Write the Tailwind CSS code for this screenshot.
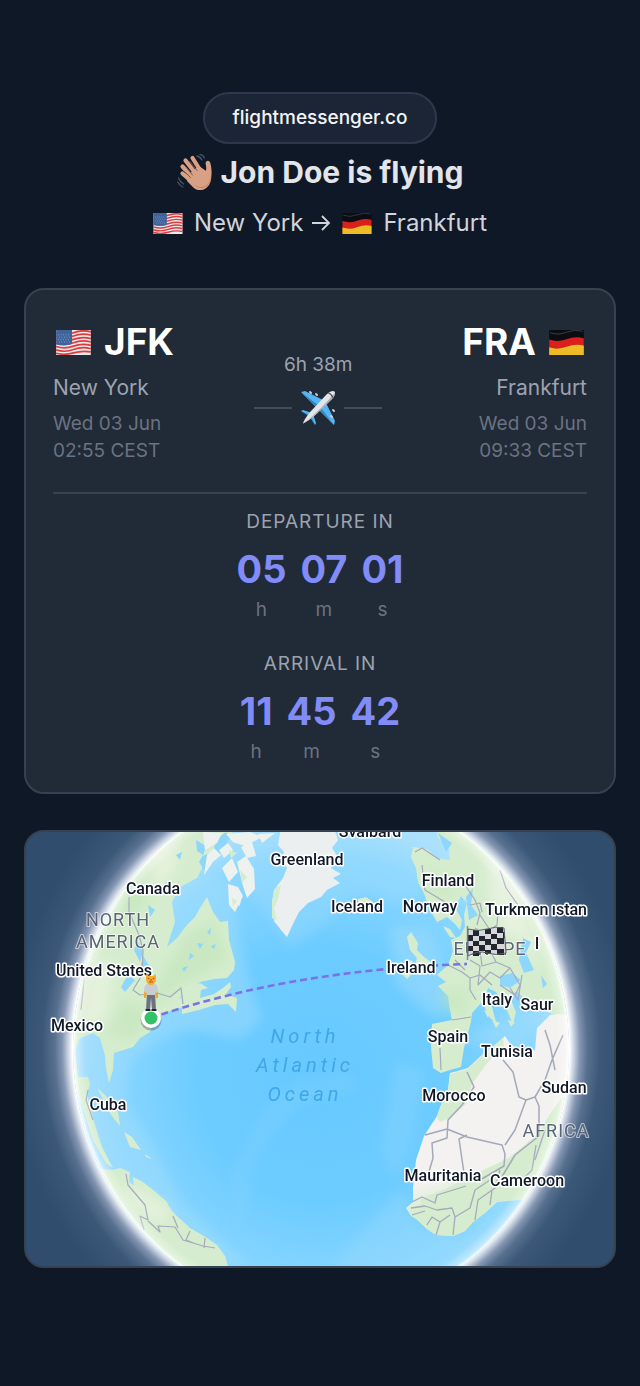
<!DOCTYPE html>
<html lang="en">
<head>
<meta charset="utf-8">
<meta name="viewport" content="width=device-width, initial-scale=1">
<title>Jon Doe is flying</title>
<script src="https://cdn.jsdelivr.net/npm/@tailwindcss/browser@4"></script>
</head>
<body class="min-h-screen bg-[#0f1827] font-['Inter',sans-serif] text-gray-200">

<!-- Shared symbols -->
<svg class="hidden" aria-hidden="true">
  <defs>
    <symbol id="us" viewBox="0 0 36 26">
      <clipPath id="wave"><path d="M1 2.500Q9 5.500 18 2T35 1V22Q27 21 18 23.500T1 25Z"/></clipPath>
      <g clip-path="url(#wave)">
        <path fill="#ece9ea" d="M0 0h36v26H0z"/>
        <g fill="none" stroke="#dc3b3f" stroke-width="1.800">
          <path d="M0 3.200Q9 6.200 18 2.800T36 2"/><path d="M0 6.700Q9 9.700 18 6.300T36 5.500"/><path d="M0 10.200Q9 13.200 18 9.800T36 9"/><path d="M0 13.700Q9 16.700 18 13.300T36 12.500"/><path d="M0 17.200Q9 20.200 18 16.800T36 16"/><path d="M0 20.700Q9 23.700 18 20.300T36 19.500"/><path d="M0 24.200Q9 26.500 18 23.800T36 22.800"/>
        </g>
        <path fill="#3f639c" d="M0 0H16.500V14.500Q9 17 0 15Z"/>
        <path stroke="#a9bcd8" stroke-width=".8" stroke-dasharray=".8 1.800" d="M2 5H15M3 7.500H15M2 10H15M3 12.500H15"/>
      </g>
    </symbol>
    <symbol id="de" viewBox="0 0 36 26">
      <g clip-path="url(#wave)">
        <path fill="#0b0d12" d="M0 0h36v26H0z"/>
        <path fill="#d9201c" d="M0 10Q9 13 18 9.500T36 8.500V26H0Z"/>
        <path fill="#edbd27" d="M0 18Q9 21 18 17.500T36 16V26H0Z"/>
      </g>
      <path fill="none" stroke="#4b5563" stroke-width=".7" d="M1 2.800Q9 5.800 18 2.300T35 1.300"/>
    </symbol>
  </defs>
</svg>

<main class="flex w-full flex-col items-center px-6 pt-[92px] pb-[116px]">
  <a href="#" class="rounded-full border-2 border-[#2c394b] bg-[#1b2535] px-7 py-[10px] text-[19px] leading-7 font-medium text-gray-100">flightmessenger.co</a>

  <h1 class="mt-2 flex items-center gap-2 text-[30px] leading-10 font-bold text-[#e2e5e9]">
    <svg class="h-9 w-9" viewBox="0 0 36 36" role="img" aria-label="Waving hand">
      <g fill="none" stroke="#d8a084" stroke-width="4.200" stroke-linecap="round">
        <path d="M5.500 12.500 15 23M8.500 6.500 19 20M15.500 4 24 17.500M5.500 19.500 14 27"/>
      </g>
      <path fill="#d8a084" d="M12 20 22 12l6.800 4.800c.7-1.900.5-4-.1-6.600-.4-1.800.3-3 1.700-3.300 1.500-.3 2.600.7 3 2.400.9 3.600 1.500 7.300 1 12.600-.3 4.500-1 8.300-4.300 11.300-4 3.800-9.700 4-13.500.5L10 27Z"/>
      <path fill="#c77f48" d="M34 21c-.4 5.500-2.500 9.700-6.800 11.500-3 1.100-6.500.9-9.800-1.700 3.700 4.300 9.400 4.200 13.200.4 2.800-2.600 3.200-6 3.400-10.200Z"/>
      <path fill="none" stroke="#7d5447" stroke-width="1" stroke-linecap="round" d="M8.500 12.500l7 8.500M13 7.500l7 9M7.500 17.500l6 6"/>
      <path fill="none" stroke="#4b5563" stroke-width="1.300" stroke-linecap="round" d="M20 2q3 .5 5 4M22.500 0q3.500 1 5 4M1.500 24q1.500 4 5 6M.8 28q1.700 3.500 5 5"/>
    </svg>
    Jon Doe is flying
  </h1>

  <p class="mt-2 flex items-center text-2xl leading-[46px] text-[#d1d5db]">
    <svg class="mr-[11px] h-[21px] w-[30px]" role="img" aria-label="United States"><use href="#us"/></svg>
    New York
    <svg class="mx-2 h-6 w-5" viewBox="0 0 20 24" fill="none" stroke="currentColor" stroke-width="1.800" role="img" aria-label="to"><path d="M1 12H18M11 5l7 7-7 7"/></svg>
    <svg class="mx-[3px] h-[21px] w-[30px]" role="img" aria-label="Germany"><use href="#de"/></svg>
    <span class="ml-2">Frankfurt</span>
  </p>

  <section class="mt-[42px] w-full rounded-[20px] border-2 border-[#37414f] bg-[#212a37] px-[27px] pt-7 pb-[26px]">
    <div class="flex items-start justify-between">
      <div>
        <h2 class="flex items-center gap-3 pl-0.5 text-[37px] leading-[48px] font-bold text-white">
          <svg class="h-[25px] w-[37px]" role="img" aria-label="United States"><use href="#us"/></svg>JFK
        </h2>
        <p class="mt-1 text-[21px] leading-9 text-[#9ca3af]">New York</p>
        <p class="mt-1 text-[19px] leading-[27px] text-[#6b7280]">Wed 03 Jun<br>02:55 CEST</p>
      </div>
      <div class="mt-[33px] flex flex-col items-center">
        <p class="text-[19px] leading-7 text-[#9ca3af]">6h 38m</p>
        <div class="mt-[11px] flex items-center gap-2">
          <span class="h-0.5 w-[38px] bg-[#434c5a]"></span>
          <svg class="h-9 w-9" viewBox="0 0 36 36" role="img" aria-label="Airplane">
            <path fill="#55b5f3" d="M1 2 5 1l18 9-7 7ZM34 35l1-4-9-18-7 7ZM1 21l2-1 9 3-3 3ZM15 35l1-2-3-9-3 3Z"/>
            <path fill="#2f86c8" d="M1 2l15 15 2-2ZM34 35 19 20l2-2ZM1 21l8 5 1-1ZM15 35l-5-8 1-1Z"/>
            <path fill="#e2e4e8" d="M34.500 1.500c1.500 1.500-.5 5.500-3 8L17 23.500C11 29 4.500 33 3 33.500 3.500 31 7.500 24.500 13 19L26.500 4.500c2.500-2.500 6.500-4.500 8-3Z"/>
            <path fill="#a8adb5" d="M35 3c.3 2-1.500 4.700-3.500 6.500L17 23.500C11 29 4.500 33 3 33.500 12 28 23 16 35 3Z"/>
            <path fill="none" stroke="#343b47" stroke-width="1.200" stroke-linecap="round" d="M29 3.500q2 0 3.500 3.500"/>
            <path stroke="#c9ced6" stroke-width="2" stroke-linecap="round" d="M10 2l1 1M16 4l1 1M33 20l1 1M31 26l1 1"/>
          </svg>
          <span class="h-0.5 w-[38px] bg-[#434c5a]"></span>
        </div>
      </div>
      <div class="text-right">
        <h2 class="flex items-center justify-end gap-3 pr-0.5 text-[37px] leading-[48px] font-bold text-white">
          FRA<svg class="h-[25px] w-[37px]" role="img" aria-label="Germany"><use href="#de"/></svg>
        </h2>
        <p class="mt-1 text-[21px] leading-9 text-[#9ca3af]">Frankfurt</p>
        <p class="mt-1 text-[19px] leading-[27px] text-[#6b7280]">Wed 03 Jun<br>09:33 CEST</p>
      </div>
    </div>

    <hr class="mt-7 border-t-2 border-[#37414f]">

    <div class="mt-[14px] flex flex-col items-center">
      <h3 class="text-[19px] leading-7 tracking-wider text-[#9ca3af]">DEPARTURE IN</h3>
      <div class="mt-2 flex gap-[14px] text-center">
        <div><p class="text-[38px] leading-[50px] font-bold text-[#818cf8]">05</p><p class="mt-0.5 text-[19px] leading-7 text-[#6b7280]">h</p></div>
        <div><p class="text-[38px] leading-[50px] font-bold text-[#818cf8]">07</p><p class="mt-0.5 text-[19px] leading-7 text-[#6b7280]">m</p></div>
        <div><p class="text-[38px] leading-[50px] font-bold text-[#818cf8]">01</p><p class="mt-0.5 text-[19px] leading-7 text-[#6b7280]">s</p></div>
      </div>
      <h3 class="mt-[26px] text-[19px] leading-7 tracking-wider text-[#9ca3af]">ARRIVAL IN</h3>
      <div class="mt-2 flex gap-[14px] text-center">
        <div><p class="text-[38px] leading-[50px] font-bold text-[#818cf8]">11</p><p class="mt-0.5 text-[19px] leading-7 text-[#6b7280]">h</p></div>
        <div><p class="text-[38px] leading-[50px] font-bold text-[#818cf8]">45</p><p class="mt-0.5 text-[19px] leading-7 text-[#6b7280]">m</p></div>
        <div><p class="text-[38px] leading-[50px] font-bold text-[#818cf8]">42</p><p class="mt-0.5 text-[19px] leading-7 text-[#6b7280]">s</p></div>
      </div>
    </div>
  </section>

  <section class="mt-9 w-full overflow-hidden rounded-[20px] border-2 border-[#37414f] bg-[#304d6d]" aria-label="Flight map">
    <svg class="block h-auto w-full" viewBox="26 832 588 434">
      <defs>
        <radialGradient id="halo" gradientUnits="userSpaceOnUse" cx="0" cy="0" r="1" gradientTransform="translate(321 1049) scale(310 326)">
          <stop offset=".802" stop-color="#fff"/><stop offset=".815" stop-color="#ccd5e3"/><stop offset=".835" stop-color="#8496b2"/><stop offset=".86" stop-color="#57708f"/><stop offset=".9" stop-color="#3c5879"/><stop offset="1" stop-color="#304d6d"/>
        </radialGradient>
        <radialGradient id="sea" gradientUnits="userSpaceOnUse" cx="0" cy="0" r="1" gradientTransform="translate(321 1075) scale(248 258)">
          <stop offset="0" stop-color="#66c9ff"/><stop offset=".5" stop-color="#6dccff"/><stop offset=".85" stop-color="#8ad7ff"/><stop offset="1" stop-color="#aee2fd"/>
        </radialGradient>
        <radialGradient id="rim" gradientUnits="userSpaceOnUse" cx="0" cy="0" r="1" gradientTransform="translate(321 1049) scale(248 264)">
          <stop offset=".95" stop-color="#fff" stop-opacity="0"/><stop offset=".985" stop-color="#fff" stop-opacity=".35"/><stop offset="1" stop-color="#fff"/>
        </radialGradient>
        <linearGradient id="africa" gradientUnits="userSpaceOnUse" x1="455" y1="1080" x2="500" y2="1225">
          <stop offset="0" stop-color="#f3f2f0"/><stop offset=".6" stop-color="#f3f2f0"/><stop offset=".75" stop-color="#d5edce"/>
        </linearGradient>
        <filter id="soft" x="-20%" y="-20%" width="140%" height="140%"><feGaussianBlur stdDeviation="6"/></filter>
        <clipPath id="globe"><ellipse cx="321" cy="1049" rx="248" ry="264"/></clipPath>
      </defs>

      <rect x="26" y="832" width="588" height="434" fill="#304d6d"/>
      <ellipse cx="321" cy="1049" rx="310" ry="326" fill="url(#halo)"/>

      <g clip-path="url(#globe)">
        <rect x="60" y="780" width="520" height="540" fill="url(#sea)"/>
        <!-- Shallow water -->
        <g fill="#a6defc" opacity=".45" filter="url(#soft)">
          <path d="M170 870 230 880 240 940 252 990 262 1020 240 1040 190 1030 160 1040 130 1060 124 1100 150 1140 180 1200 215 1235 250 1266 180 1266 90 1130 70 1050Z"/>
          <path d="M240 832 330 832 440 832 440 880 400 905 365 890 330 920 290 950 262 910 240 880Z" opacity=".7"/>
          <path d="M390 925 430 930 450 980 440 1020 425 1010 395 985Z"/>
          <path d="M460 1040 520 1010 550 1010 520 1050Z"/>
          <path d="M400 1190 420 1230 470 1240 540 1190 470 1290 330 1266Z" opacity=".6"/>
          <path d="M270 1100 300 1080 345 1070 360 1090 300 1105 260 1150 240 1230 230 1170Z" opacity=".35"/>
          <path d="M395 1060 425 1070 410 1150 395 1180 380 1150Z" opacity=".5"/>
        </g>

        <!-- North America -->
        <path fill="#d5edce" d="M60 820H240L222 850 205 862 197 878 180 887 172 902 175 922 167 947 177 938 187 925 195 917 200 908 207 897 213 912 220 922 228 921 229 940 235 962 234 970 227 978 214 979 200 982 187 988 178 1000 190 988 198 983 200 995 183 1007 167 1012 153 1022 150 1032 140 1038 133 1047 114 1053 113 1070 109 1083 106 1068 105 1056 100 1038 93 1033 80 1038 75 1050 78 1077 88 1077 90 1084 87 1095 95 1125 102 1147 113 1168 106 1163 93 1140 80 1100 60 1060Z"/>
        <path fill="#c5e6bd" opacity=".7" filter="url(#soft)" d="M185 935 215 920 228 960 200 975 180 985 160 1005 150 1000 165 970ZM125 1000 150 1010 135 1040 105 1035ZM120 850 150 900 130 920 110 900Z"/>
        <path fill="#e9f3df" opacity=".8" filter="url(#soft)" d="M150 850 180 840 175 870 155 890ZM90 960 115 965 105 1020 80 1030Z"/>
        <path fill="#d5edce" d="M182 988 200 983 208 988 201 990 200 998 214 994 223 988 230 982 231 987 226 994 237 998 236 1012 228 1004 215 1005 199 1010 182 1014Z"/>
        <!-- Arctic islands -->
        <path fill="#8fd6fd" d="M196 840 206 846 203 856 212 852 218 838 226 832 230 838 224 848 214 862 204 870 199 862 203 855 197 851Z"/>
        <path fill="#eef2ef" d="M203 832 222 833 217 843 205 850ZM207 855 214 848 221 855 213 862 204 875ZM226 834 250 832 262 837 245 846 233 842ZM222 868 232 858 238 872 229 882ZM237 862 246 856 254 869 255 889 247 898 243 886ZM228 884 238 887 243 896 235 912 229 905ZM241 847 252 842 256 856 247 858ZM219 850 228 843 233 850 224 858ZM258 834 275 833 262 843ZM238 894 241 901 239 907Z"/>
        <path fill="#d5edce" d="M229 850 237 853 231 858ZM240 870 247 877 242 883ZM232 898 237 901 233 907Z"/>
        <!-- Lakes -->
        <path fill="#8fd6fd" d="M138 942 143 952 140 962 134 950ZM143 956 149 965 145 972 141 965ZM128 975 135 980 125 992 121 987ZM148 905 155 910 150 917ZM176 855 182 852 180 860ZM197 943 203 944 200 949ZM190 953 194 956 189 960ZM211 946 216 944 214 949ZM182 968 188 966 184 972ZM207 932 211 928 210 935ZM163 885 168 881 167 889Z"/>
        <!-- Greenland and Iceland -->
        <path fill="#eceff0" d="M281 828 278 845 284 852 282 861 287 868 283 878 274 890 272 905 274 921 281 930 287 937 293 924 299 912 308 903 321 897 327 890 340 883 333 878 341 874 331 868 338 857 332 848 338 840 334 828Z"/>
        <path fill="#d5edce" d="M275 888 281 885 278 899 274 908 277 921 272 918 272 900ZM358 899 366 897 373 902 366 907 358 905Z"/>
        <!-- Caribbean -->
        <path fill="#d5edce" d="M97 1088 106 1096 118 1112 120 1126 111 1115 104 1101ZM124 1132 132 1137 141 1150 130 1147ZM145 1154 152 1159 146 1157Z"/>
        <!-- South America -->
        <path fill="#d5edce" d="M112 1170 120 1168 130 1172 129 1182 134 1186 133 1177 143 1182 153 1190 166 1201 171 1210 178 1217 190 1228 204 1236 217 1245 225 1256 228 1266 229 1280H60V1165Z"/>
        <path fill="#e9f3df" opacity=".8" filter="url(#soft)" d="M120 1180 170 1210 160 1225 130 1205Z"/>

        <!-- Europe and Asia -->
        <path fill="#d5edce" d="M434 820 438 838 449 848 450 860 437 858 427 849 413 847 411 857 416 868 418 882 424 893 429 908 437 922 447 917 455 924 460 930 462 920 455 907 461 896 467 903 464 915 465 927 460 936 451 940 453 951 448 965 437 975 446 982 438 986 448 996 450 1010 452 1020 432 1024 431 1047 433 1068 441 1073 450 1070 461 1067 464 1048 471 1022 472 1013 482 1002 490 1018 496 1022 492 1007 486 995 488 988 496 992 506 1008 513 1024 516 1012 510 997 517 991 524 999 540 1006 548 1012 564 1020 600 1030V800H434Z"/>
        <path fill="#ebf3e3" opacity=".8" filter="url(#soft)" d="M485 840 520 890 540 970 520 940 490 900ZM500 910 530 930 500 935Z"/>
        <path fill="#c5e6bd" opacity=".6" filter="url(#soft)" d="M440 990 470 990 465 1015 445 1010ZM425 870 450 880 455 900 430 890Z"/>
        <path fill="#8fd6fd" d="M466 897 473 888 471 905 478 915 469 920ZM523 938 531 942 526 953 534 970 524 973 519 960ZM500 976 512 973 521 980 510 988 500 985ZM438 833 452 843 446 852ZM541 975 547 984 543 988Z"/>
        <!-- Britain, Ireland -->
        <path fill="#d5edce" d="M407 937 411 932 418 943 417 950 424 957 431 962 430 973 420 975 415 965 417 958 410 950ZM404 963 412 960 414 972 407 979 401 973ZM443 926 450 929 456 938 450 937Z"/>
        <path fill="#d5edce" d="M484 1010 490 1012 488 1018ZM492 1020 500 1023 496 1028ZM508 1020 515 1022 511 1027Z"/>

        <!-- Africa and Arabia -->
        <path fill="url(#africa)" d="M450 1073 458 1071 468 1068 483 1054 497 1044 505 1036 511 1045 525 1053 535 1050 537 1028 550 1015 560 1014 600 1020V1200H523L513 1199 497 1202 485 1213 473 1222 465 1231 453 1236 436 1235 427 1229 418 1220 411 1216 406 1208 413 1202 413 1187 416 1160 424 1136 437 1116 441 1105 448 1090Z"/>
        <path fill="#d5edce" d="M450 1074 468 1069 483 1054 503 1038 504 1046 488 1062 472 1084 466 1104 450 1118 440 1122 437 1117 441 1105 448 1090ZM420 1199 445 1189 480 1172 510 1157 538 1134 552 1111 575 1080V1200H520L497 1202 485 1213 473 1222 465 1231 453 1236 436 1235 427 1229 415 1218 422 1210Z"/>

        <!-- Borders -->
        <g fill="none" stroke="#a6a9be" stroke-width="1.200" stroke-linejoin="round">
          <path d="M129 897V912L139 935 143 950 142 975 133 990 140 995 157 993 170 997 181 988 183 1004M83 960 84 980 81 1010M88 1090 86 1100 93 1120M126 1174 128 1185 145 1205 148 1220 140 1216 144 1230M148 1221 160 1232 158 1226 175 1227 183 1240 203 1246 215 1248M173 1216 178 1228M190 1231 186 1240 196 1244M205 1238 204 1248"/>
          <path d="M415 852 422 848 440 860M422 865 425 890 445 902M500 870 506 888 518 905M465 885 475 900 480 913 477 925M470 905 480 903 482 912M480 915 490 930 497 925 498 912M475 928 486 935 493 943M448 965 462 972 470 978 480 975 492 985M455 960 465 970M470 978 470 990 476 1000M470 960 480 966 478 985 490 972 500 978 510 968 520 985 515 995 500 985M490 950 496 962 510 968M480 950 482 966 496 962M510 988 518 1000 522 975M452 1020 471 1017M440 1048 441 1070"/>
          <path stroke="#a3a9b9" stroke-width="1.500" d="M467 1072 474 1087 462 1105 448 1120 447 1138 432 1143 433 1158 428 1175M425 1135 447 1129 467 1137 502 1145 505 1154 504 1166 480 1180M467 1135 459 1139 465 1180M505 1145 515 1130 526 1100 519 1097 513 1072 503 1060M526 1100 535 1097 539 1106 539 1136 515 1155 500 1180M535 1097 545 1080 552 1060M555 1070 550 1045 545 1030M552 1060 563 1035"/>
          <path stroke-width="1.300" d="M412 1202 422 1197 435 1203 437 1195 466 1186M411 1208 425 1206 437 1210 452 1208 455 1217 470 1208 475 1190 490 1180M412 1215 425 1211M427 1225 432 1217 440 1222 450 1215M453 1235 455 1217M436 1235 440 1222M475 1220 478 1200 495 1188 500 1170M490 1205 492 1190M536 1145 532 1170 522 1180M545 1130 535 1160"/>
        </g>
        <ellipse cx="321" cy="1049" rx="248" ry="264" fill="url(#rim)"/>
      </g>

      <!-- Route -->
      <path fill="none" stroke="#7a72e6" stroke-width="2.600" stroke-dasharray="7 4" d="M151 1018Q290 970 467 964"/>

      <!-- Labels -->
      <g class="font-['Roboto',sans-serif] text-[20px]" fill="#3fa7e6" font-style="italic" letter-spacing="4" text-anchor="middle">
        <text x="305" y="1043">North</text><text x="305" y="1072">Atlantic</text><text x="305" y="1101">Ocean</text>
      </g>
      <g class="font-['Roboto',sans-serif] text-[18px]" fill="#5b6475" stroke="#fff" stroke-opacity=".6" stroke-width="2" stroke-linejoin="round" paint-order="stroke" text-anchor="middle" letter-spacing="1">
        <text x="118" y="926">NORTH</text><text x="118" y="948">AMERICA</text><text x="490" y="955">EUROPE</text><text x="556" y="1137">AFRICA</text>
      </g>
      <g class="font-['Roboto',sans-serif] text-[16px] font-medium" fill="#101828" stroke="#fff" stroke-width="3" stroke-linejoin="round" paint-order="stroke" text-anchor="middle">
        <text x="370" y="837">Svalbard</text>
        <text x="307" y="865">Greenland</text>
        <text x="448" y="886">Finland</text>
        <text x="153" y="894">Canada</text>
        <text x="357" y="912">Iceland</text>
        <text x="430" y="912">Norway</text>
        <text x="485" y="915" text-anchor="start">Turkmen</text>
        <text x="587" y="915" text-anchor="end">ıstan</text>
        <text x="537" y="949">I</text>
        <text x="104" y="976">United States</text>
        <text x="411" y="973">Ireland</text>
        <text x="497" y="1005">Italy</text>
        <text x="537" y="1010">Saur</text>
        <text x="77" y="1031">Mexico</text>
        <text x="448" y="1042">Spain</text>
        <text x="507" y="1057">Tunisia</text>
        <text x="564" y="1093">Sudan</text>
        <text x="454" y="1101">Morocco</text>
        <text x="108" y="1110">Cuba</text>
        <text x="443" y="1181">Mauritania</text>
        <text x="527" y="1186">Cameroon</text>
      </g>

      <!-- Traveller marker -->
      <circle cx="151" cy="1020" r="10.500" fill="#1f2937" opacity=".3"/>
      <circle cx="151" cy="1018" r="10" fill="#fff"/><circle cx="151" cy="1018" r="6.500" fill="#34c267"/>
      <g>
        <path fill="#6e7280" d="M147 992h8l1 18h-4l-1-12-1 12h-4Z"/>
        <path fill="#242832" d="M145.500 1009h5v2h-5ZM151.500 1009h5v2h-5Z"/>
        <path fill="#f2a62b" d="M144 990l3 1-1 7h-2ZM155 991l3-1v8h-2Z"/>
        <path fill="#c9ccd2" d="M147 984h8q3 1 3 8l-3 1v2h-8v-2l-3-1q0-7 3-8Z"/>
        <path fill="#f5ad2d" d="M146 974l3 2h4l3-2v6q-1 5-5 5t-5-5Z"/>
        <path fill="none" stroke="#bc4d22" stroke-width="1" d="M147.500 978l2 1M154.500 978l-2 1M149 982h4M151 979v2"/>
      </g>

      <!-- Chequered flag -->
      <g>
        <path stroke="#888d95" stroke-width="1.500" d="M467.500 926V960"/>
        <path fill="#d5d7da" d="M468 929Q478 932 487 929T504 928L506 953Q496 956 487 953T468 956Z"/>
        <path fill="#23262d" d="M473 930h6v6h-6ZM485 929h6v5h-6ZM497 927h6v6h-6ZM468 935h5v6h-5ZM479 936h6v5h-6ZM491 934h6v5h-6ZM473 941h6v5h-6ZM485 939h6v6h-6ZM497 938h7v6h-7ZM468 946h5v5h-5ZM479 945h6v6h-6ZM491 944h6v6h-6ZM473 951h6v5h-6ZM485 950h6v4h-6ZM497 949h7v6h-7ZM503 932h2v6h-2Z"/>
        <path fill="none" stroke="#5b606a" d="M468 929Q478 932 487 929T504 928L506 953Q496 956 487 953T468 956Z"/>
      </g>
    </svg>
  </section>
</main>
</body>
</html>
